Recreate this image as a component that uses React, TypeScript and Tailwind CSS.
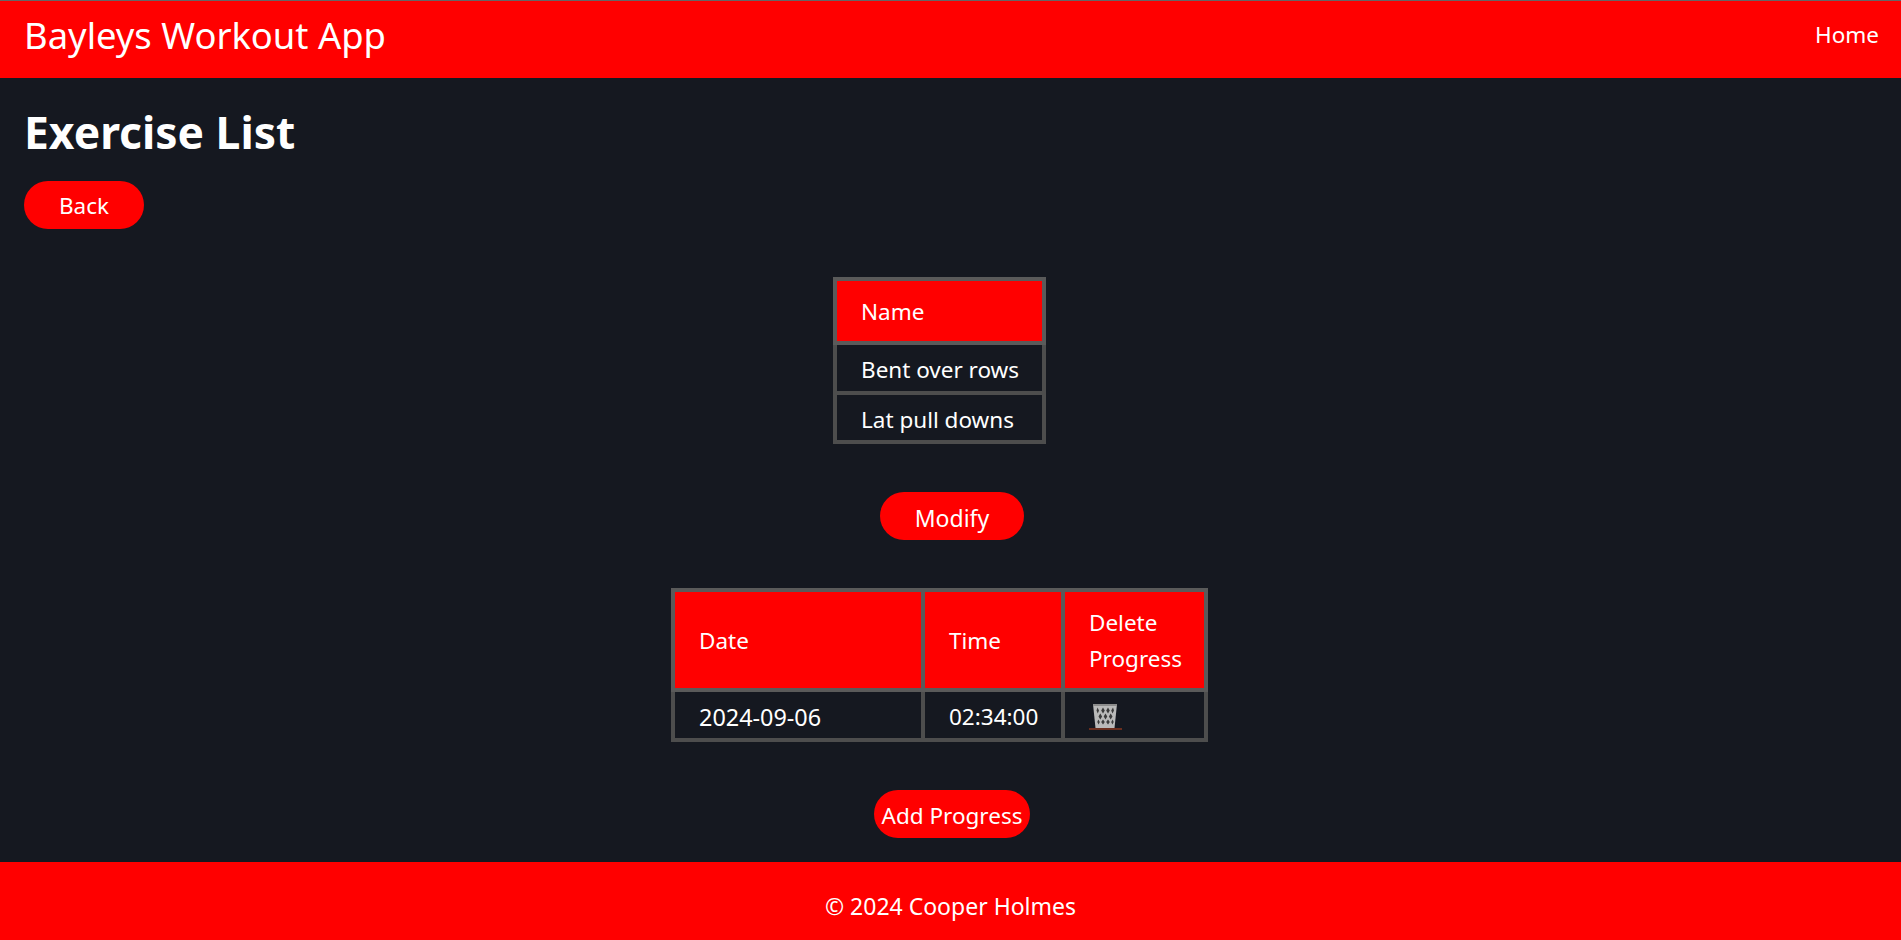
const headCell = "border-4 border-[#5a5a5a] bg-[#ff0000] px-6 pt-[13px] pb-[11px] text-left font-normal";
const bodyCell = "border-4 border-[#4d4d4d] px-6 pt-[7px] pb-[3px] whitespace-nowrap";

function TrashIcon() {
  return (
    <svg width="33" height="26" viewBox="0 0 33 26" className="block">
      <path d="M4 0h24l-2.5 24H6.5z" fill="#b9b9b9" />
      <path d="M4 0h24v2H4z" fill="#8c8c8c" />
      <g fill="#3b3b3b">
        <path d="M8.5 3.5l1.5 3-1.2 3-1.3-3zM14 3.5l1.8 3-1.8 3-1.8-3zM19 3.5l1.8 3-1.8 3-1.8-3zM24 3.5l1 3-1.5 3-1.3-3z" />
        <path d="M11.3 9.5l1.8 3-1.8 3-1.8-3zM16.5 9.5l1.8 3-1.8 3-1.8-3zM21.7 9.5l1.8 3-1.8 3-1.8-3z" />
        <path d="M9.3 15.5l1.5 2.5-1.2 2.5-1.3-2.5zM14 15.5l1.8 2.5-1.8 2.5-1.8-2.5zM19 15.5l1.8 2.5-1.8 2.5-1.8-2.5zM23.7 15.5l1 2.5-1.3 2.5-1.2-2.5z" />
      </g>
      <path d="M0 24h33v2H0z" fill="#6b2e1e" />
    </svg>
  );
}

export default function App() {
  return (
    <div className="flex h-[940px] flex-col bg-[#151820] font-['Noto_Sans','Open_Sans',sans-serif] text-[22.5px] leading-[36px] text-white">
      <header className="flex h-[78px] shrink-0 items-start justify-between border-t border-[#666] bg-[#ff0000] pl-6 pr-[22px]">
        <span className="mt-[10px] text-[36.4px] leading-[48px]">Bayleys Workout App</span>
        <span className="mt-[16px]">Home</span>
      </header>
      <main className="flex flex-1 flex-col">
        <div className="flex flex-col items-start px-6">
          <h1 className="mt-[29px] h-[50px] text-[44.4px] font-bold leading-[50px]">Exercise List</h1>
          <button className="mt-[24px] h-12 w-[120px] rounded-3xl bg-[#ff0000] pt-[2px]">Back</button>
        </div>
        <div className="flex flex-col items-center pr-[22px]">
          <table className="mt-12 w-[213px] table-fixed border-collapse border-4 border-[#4d4d4d]">
            <thead>
              <tr>
                <th className={headCell}>Name</th>
              </tr>
            </thead>
            <tbody>
              <tr><td className={bodyCell}>Bent over rows</td></tr>
              <tr><td className="border-4 border-[#4d4d4d] px-6 pt-[7px] pb-[2px] whitespace-nowrap">Lat pull downs</td></tr>
            </tbody>
          </table>
        </div>
        <div className="mt-12 flex justify-center pl-[3px]">
          <button className="h-12 w-36 rounded-3xl bg-[#ff0000] pt-[3px] text-[23px]">Modify</button>
        </div>
        <div className="flex flex-col items-center pr-[22px]">
          <table className="mt-12 w-[537px] table-fixed border-collapse border-4 border-[#4d4d4d]">
            <thead>
              <tr>
                <th className={"w-[250px] " + headCell}>Date</th>
                <th className={"w-[140px] " + headCell}>Time</th>
                <th className={headCell}>Delete Progress</th>
              </tr>
            </thead>
            <tbody>
              <tr>
                <td className={bodyCell + " text-[23.4px]"}>2024-09-06</td>
                <td className={bodyCell}>02:34:00</td>
                <td className="border-4 border-[#4d4d4d] px-6 pt-[7px] pb-[3px]"><TrashIcon /></td>
              </tr>
            </tbody>
          </table>
        </div>
        <div className="mt-12 flex justify-center pl-[3px]">
          <button className="h-12 w-[156px] rounded-3xl bg-[#ff0000] pt-[3px]">Add Progress</button>
        </div>
      </main>
      <footer className="flex h-[78px] shrink-0 items-center justify-center bg-[#ff0000] pt-[10px] text-[23px]">© 2024 Cooper Holmes</footer>
    </div>
  );
}
